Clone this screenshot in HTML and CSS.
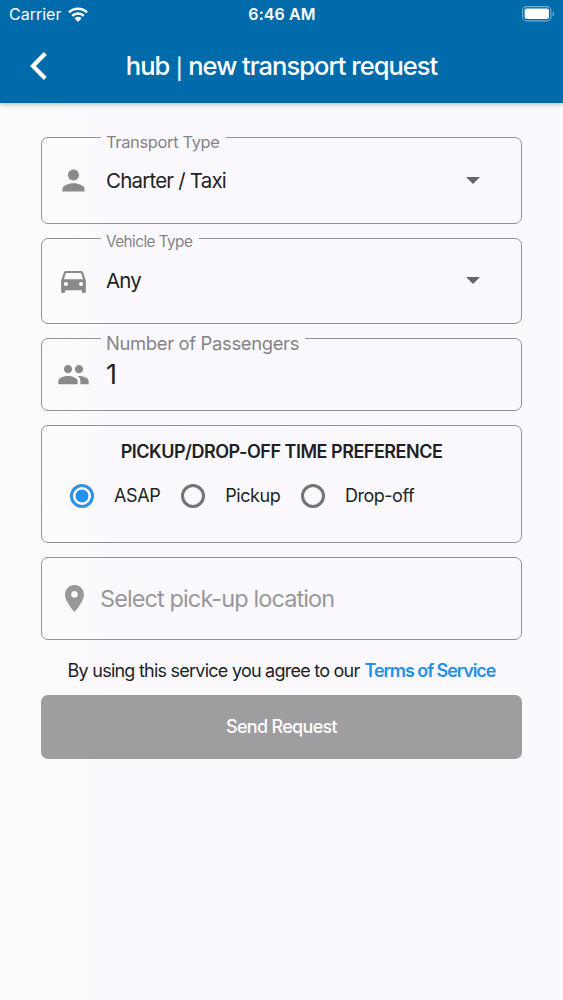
FILE: index.html
```html
<!DOCTYPE html>
<html lang="en">
<head>
<meta charset="utf-8">
<title>New transport request</title>
<link rel="stylesheet" href="styles.css">
</head>
<body>
<header class="top">
  <div class="status">
    <div class="carrier"><span>Carrier</span>
      <svg class="wifi" viewBox="0 0 20 15" width="20" height="15"><g fill="none" stroke="#fff" stroke-width="2.5"><path d="M1 5.4a13 13 0 0 1 18 0"/><path d="M4.2 8.8a8.3 8.3 0 0 1 11.6 0"/></g><path d="M6.5 11.3a5 5 0 0 1 7 0L10 15z" fill="#fff"/></svg>
    </div>
    <div class="clock">6:46 AM</div>
    <svg class="battery" viewBox="0 0 33 16" width="33" height="16"><rect x=".6" y=".6" width="28.3" height="14.3" rx="4" fill="none" stroke="#6fb0d8" stroke-width="1.1"/><rect x="2.6" y="2.6" width="24.4" height="10.4" rx="2.2" fill="#fff"/><path d="M30.6 5.4c2 .8 2 4 0 4.8z" fill="#6fb0d8"/></svg>
  </div>
  <div class="nav">
    <svg class="back" viewBox="0 0 18 28" width="18" height="28"><path d="M15.3 1.6 3 14l12.3 12.4" fill="none" stroke="#fff" stroke-width="4.2"/></svg>
    <h1 class="title">hub <span class="bar">|</span> new transport request</h1>
  </div>
</header>
<main class="form">
  <section class="field select">
    <span class="label label-transport">Transport Type</span>
    <svg class="icon" viewBox="0 0 24 24" width="34" height="34"><path d="M12 12c2.210 0 4-1.790 4-4s-1.790-4-4-4-4 1.790-4 4 1.790 4 4 4zm0 2c-2.670 0-8 1.340-8 4v2h16v-2c0-2.660-5.330-4-8-4z"/></svg>
    <span class="value">Charter / Taxi</span>
    <svg class="caret" viewBox="0 0 14 7" width="14" height="7"><path d="M0 0h14L7 7z"/></svg>
  </section>
  <section class="field select">
    <span class="label label-vehicle">Vehicle Type</span>
    <svg class="icon" viewBox="0 0 24 24" width="34" height="34"><path d="M18.920 6.010C18.720 5.420 18.160 5 17.500 5h-11c-.66 0-1.210.42-1.420 1.010L3 12v8c0 .55.45 1 1 1h1c.55 0 1-.45 1-1v-1h12v1c0 .55.45 1 1 1h1c.55 0 1-.45 1-1v-8l-2.080-5.990zM6.500 16c-.83 0-1.500-.67-1.500-1.500S5.670 13 6.500 13s1.500.67 1.500 1.500S7.330 16 6.500 16zm11 0c-.83 0-1.500-.67-1.500-1.500s.67-1.500 1.500-1.500 1.500.67 1.500 1.500-.67 1.500-1.500 1.500zM5 11l1.500-4.500h11L19 11H5z"/></svg>
    <span class="value">Any</span>
    <svg class="caret" viewBox="0 0 14 7" width="14" height="7"><path d="M0 0h14L7 7z"/></svg>
  </section>
  <section class="field count">
    <span class="label label-passengers">Number of Passengers</span>
    <svg class="icon" viewBox="0 0 24 24" width="34" height="34"><path d="M16 11c1.660 0 2.990-1.340 2.990-3S17.660 5 16 5c-1.660 0-3 1.340-3 3s1.340 3 3 3zm-8 0c1.660 0 2.990-1.340 2.990-3S9.660 5 8 5C6.340 5 5 6.340 5 8s1.340 3 3 3zm0 2c-2.330 0-7 1.170-7 3.500V19h14v-2.500c0-2.330-4.670-3.500-7-3.500zm8 0c-.29 0-.62.02-.97.05 1.160.84 1.970 1.970 1.970 3.450V19h6v-2.500c0-2.330-4.670-3.500-7-3.500z"/></svg>
    <span class="value number">1</span>
  </section>
  <section class="field times">
    <h2 class="heading">PICKUP/DROP-OFF TIME PREFERENCE</h2>
    <div class="options">
      <span class="option asap"><span class="radio on"></span>ASAP</span>
      <span class="option pickup"><span class="radio"></span>Pickup</span>
      <span class="option dropoff"><span class="radio"></span>Drop-off</span>
    </div>
  </section>
  <section class="field place">
    <svg class="pin" viewBox="5 2 14 20" width="19" height="27"><path d="M12 2C8.130 2 5 5.130 5 9c0 5.250 7 13 7 13s7-7.750 7-13c0-3.870-3.130-7-7-7zm0 9.500c-1.380 0-2.500-1.120-2.500-2.500s1.120-2.500 2.500-2.500 2.500 1.120 2.500 2.500-1.120 2.500-2.500 2.500z"/></svg>
    <span class="hint">Select pick-up location</span>
  </section>
  <p class="terms"><span>By using this service you agree to our</span><a class="link">Terms of Service</a></p>
  <button class="send">Send Request</button>
</main>
</body>
</html>
```
FILE: styles.css
```css
* { box-sizing: border-box; }
body {
  margin: 0;
  height: 1000px;
  overflow: hidden;
  background: linear-gradient(90deg, #fcfbf9 0, #fcfbfb 40px, #fbf9fd 110px);
  color: #201f23;
  font-family: Inter, "Liberation Sans", sans-serif;
  white-space: nowrap;
}

/* Header */
.top { height: 103px; background: #006bab; color: #fff; box-shadow: 0 1px 5px rgba(0, 0, 0, .3); }
.status { display: grid; grid-template-columns: 1fr auto 1fr; align-items: center; height: 28px; padding: 0 8px 0 9px; }
.carrier { display: flex; align-items: center; gap: 7px; font-size: 16px; }
.clock { font-size: 16px; font-weight: 600; letter-spacing: .1px; }
.battery { justify-self: end; }
.nav { display: grid; grid-template-columns: 60px 1fr 60px; align-items: center; height: 75px; }
.back { margin-left: 30px; }
.title { margin: 0; text-align: center; font-size: 25.5px; font-weight: 500; letter-spacing: -.98px; }
.bar { margin: 0 .6px; font-size: 20.5px; vertical-align: -.5px; }

/* Form fields */
.form { display: flex; flex-direction: column; padding: 34px 41px 0; }
.field { position: relative; border: 1.5px solid #929195; border-radius: 7px; margin-bottom: 14px; }
.select, .count { display: flex; align-items: center; padding: 0 41px 0 15px; }
.select { height: 86.5px; }
.count { height: 73px; margin-bottom: 14px; }
.label { position: absolute; left: 59px; top: -6px; padding: 0 6px 0 5px; background: #fbf9fd; color: #858488; line-height: 20px; }
.label-transport { font-size: 16.5px; letter-spacing: -.37px; }
.label-vehicle { top: -7px; padding-right: 7px; font-size: 15.3px; letter-spacing: -.55px; }
.label-passengers { font-size: 18.4px; letter-spacing: -.33px; }
.icon { width: 33px; height: 33px; margin: 0 1px 0 0; fill: #8a898c; }
.pin { fill: #98979a; }
.value { flex: 1; margin-left: 15px; font-size: 20.5px; letter-spacing: -.8px; }
.number { padding-bottom: 1px; font-size: 27px; }
.caret { fill: #666569; }

/* Time preference */
.times { height: 118px; margin-bottom: 13.5px; padding-top: 15px; }
.heading { margin: 0; text-align: center; font-size: 18px; font-weight: 600; line-height: 22px; letter-spacing: -.49px; }
.options { display: flex; align-items: center; gap: 20.3px; margin-top: 20.5px; padding-left: 27.5px; font-size: 18px; line-height: 24px; }
.option { display: flex; align-items: center; gap: 20px; }
.asap { letter-spacing: -.35px; }
.pickup { letter-spacing: -.45px; }
.dropoff { letter-spacing: -.5px; }
.radio { width: 24.5px; height: 24.5px; border: 3px solid #747378; border-radius: 50%; }
.on { border-color: #2e92de; background: radial-gradient(circle, #2490ee 6px, transparent 6.8px); }

/* Location, terms and submit */
.place { display: flex; align-items: center; gap: 16px; height: 83px; margin-bottom: 20.5px; padding-left: 23px; }
.hint { padding-top: 1px; font-size: 23.5px; letter-spacing: -.9px; color: #98979a; }
.terms { display: flex; justify-content: center; gap: 5px; margin: 0 0 14px; font-size: 18px; line-height: 21px; letter-spacing: -.76px; }
.link { font-weight: 600; letter-spacing: -1.05px; color: #2490e6; }
.send { height: 63.5px; border: 0; border-radius: 7px; background: #9f9da0; color: #fff; font: 500 18px Inter, sans-serif; letter-spacing: -.69px; }
```
